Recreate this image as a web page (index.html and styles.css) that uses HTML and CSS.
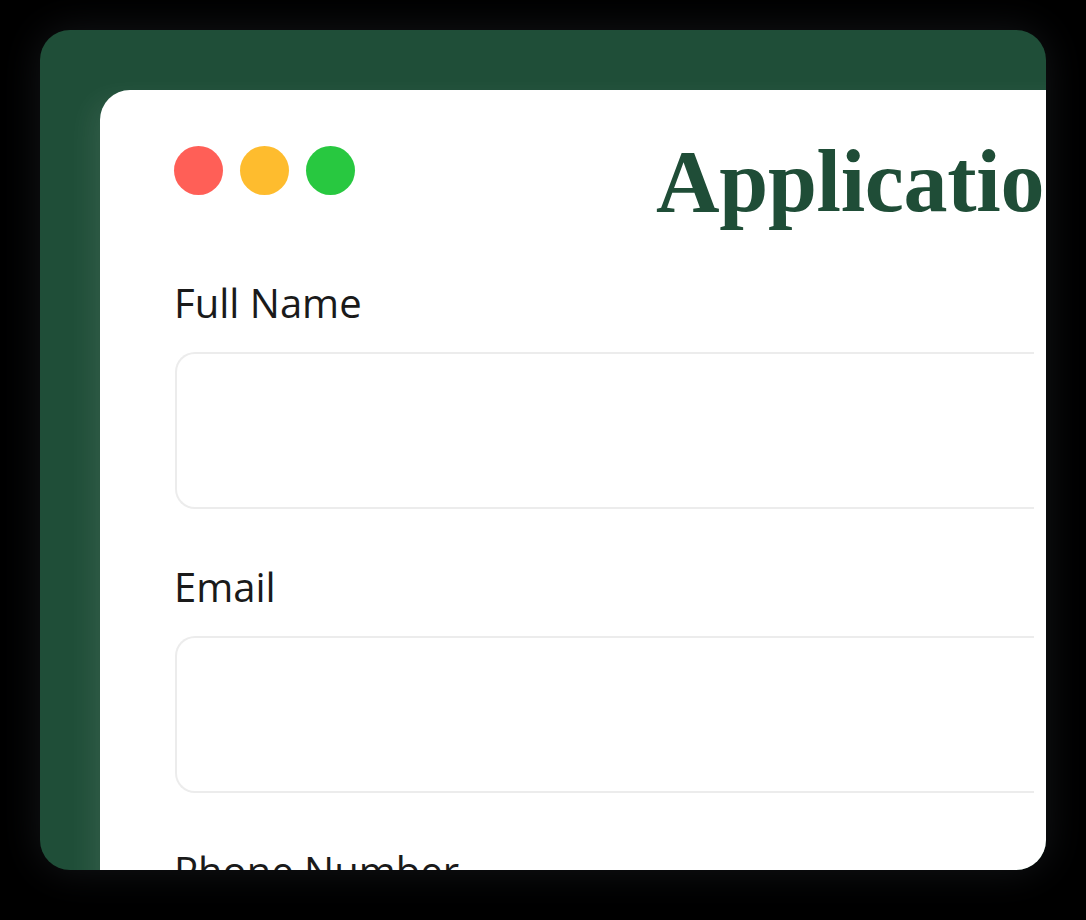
FILE: index.html
```html
<!DOCTYPE html>
<html lang="en">
<head>
<meta charset="utf-8">
<title>Application</title>
<link rel="stylesheet" href="styles.css">
</head>
<body>
<div class="frame">
  <div class="window">
    <div class="header">
      <div class="dots">
        <span class="dot dot-red"></span>
        <span class="dot dot-yellow"></span>
        <span class="dot dot-green"></span>
      </div>
      <h1 class="title">Application</h1>
    </div>
    <form class="form">
      <label class="label">Full Name</label>
      <div class="input"></div>
      <label class="label">Email</label>
      <div class="input"></div>
      <label class="label">Phone Number</label>
      <div class="input"></div>
    </form>
  </div>
</div>
</body>
</html>
```

FILE: styles.css
```css
html, body {
  margin: 0;
  padding: 0;
}
body {
  background: #000;
  width: 1086px;
  height: 920px;
  overflow: hidden;
  padding-top: 30px;
  box-sizing: border-box;
  font-family: "Open Sans", "Liberation Sans", sans-serif;
}
.frame {
  margin-left: 40px;
  width: 1006px;
  height: 840px;
  border-radius: 30px;
  background: #1f4e38;
  overflow: hidden;
  box-shadow: 0 0 40px rgba(45, 48, 55, 0.45);
  padding: 60px 0 0 60px;
  box-sizing: border-box;
}
.window {
  width: 1200px;
  height: 1000px;
  background: #fff;
  border-top-left-radius: 30px;
  padding: 56px 0 0 74px;
  box-sizing: border-box;
  box-shadow: -18px 0 30px -12px rgba(255, 255, 255, 0.09);
}
.header {
  display: flex;
  align-items: flex-start;
}
.dots {
  display: flex;
  gap: 17px;
}
.dot {
  width: 49px;
  height: 49px;
  border-radius: 50%;
  display: block;
}
.dot-red { background: #ff5f57; }
.dot-yellow { background: #febc2e; }
.dot-green { background: #28c840; }
.title {
  margin: -8px 0 0 301px;
  font-family: "Liberation Serif", "DejaVu Serif", serif;
  font-weight: 700;
  font-size: 88px;
  line-height: 88px;
  color: #1f4d37;
  white-space: nowrap;
  letter-spacing: -0.3px;
}
.form {
  width: 860px;
  margin-top: 53px;
  display: flex;
  flex-direction: column;
}
.label {
  display: block;
  font-size: 40px;
  line-height: 48px;
  color: #1a1a1a;
}
.input {
  width: 859px;
  height: 157px;
  box-sizing: border-box;
  border: 2px solid #ececec;
  border-right: none;
  border-radius: 20px 0 0 20px;
  margin: 25px 0 54px 1px;
}
```
